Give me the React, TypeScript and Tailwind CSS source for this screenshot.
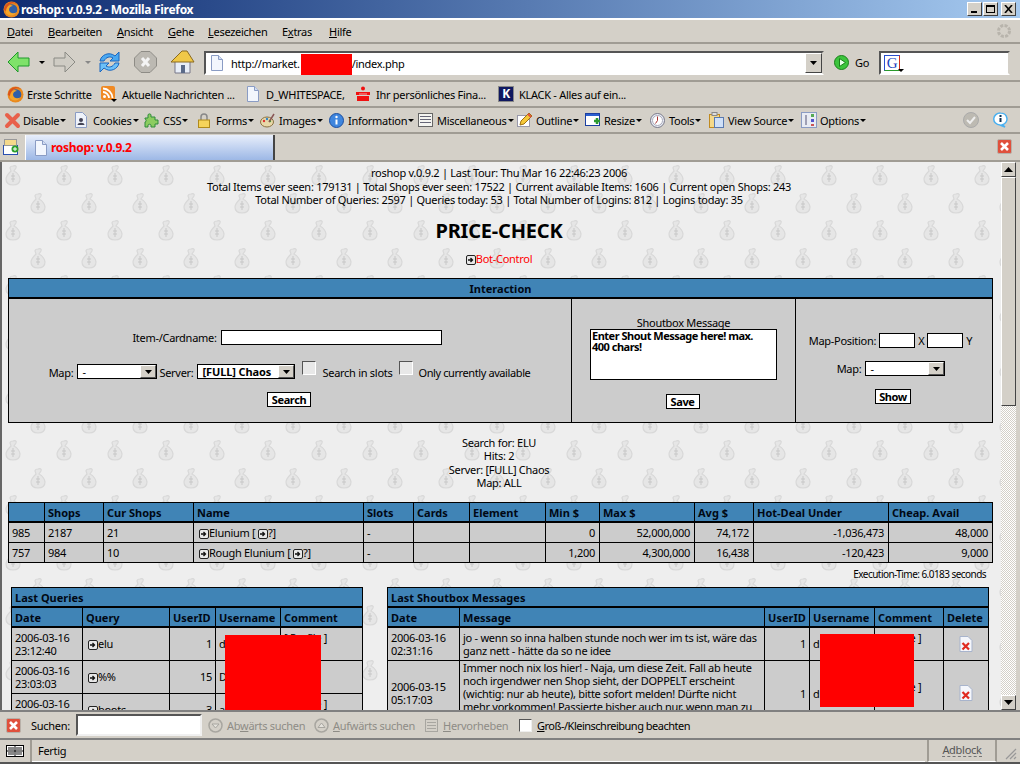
import React from "react";

const Page = ({ c = "" }: { c?: string }) => (
  <svg className={c} width="14" height="16" viewBox="0 0 14 16">
    <path d="M1.5.5h7l4 4v11h-11z" fill="#f2f6fd" stroke="#8a9cc4" />
    <path d="M8.5.5v4h4" fill="#d4def2" stroke="#8a9cc4" />
  </svg>
);
const Plus = () => (
  <svg className="inline-block align-[-2px]" width="10" height="10" viewBox="0 0 10 10">
    <rect x=".5" y=".5" width="9" height="9" rx="1.5" fill="#e8e8e8" stroke="#222" />
    <path d="M2 5h4M4.5 3l2 2-2 2" fill="none" stroke="#111" strokeWidth="1.3" />
  </svg>
);
const Fox = () => (
  <svg width="17" height="17" viewBox="0 0 17 17">
    <circle cx="8.5" cy="8.5" r="8" fill="#e98a1f" />
    <circle cx="9" cy="8.5" r="5.3" fill="#2f5fa8" />
    <path d="M3 12C5 15 11 16 14 11 11 13 7 13 6 9 6 6 8 5 10 5 8 3 4 4 3 7Z" fill="#f4a52a" />
    <path d="M1 9c0-5 4-8 8-8 2 0 4 1 5 2-3-1-6-1-8 1C4 6 3 8 3 10Z" fill="#d9531e" />
  </svg>
);
const RedX = () => (
  <svg width="15" height="15" viewBox="0 0 15 15">
    <rect x=".5" y=".5" width="14" height="14" rx="1.5" fill="#e0503c" stroke="#b8b0a8" />
    <path d="M4 4l7 7M11 4l-7 7" stroke="#fff" strokeWidth="2.6" />
  </svg>
);
const Drop = ({ c = "#000" }: { c?: string }) => (
  <svg width="6" height="3" viewBox="0 0 6 3">
    <path d="M0 0h6L3 3z" fill={c} />
  </svg>
);
const Bevel = ({ children }: { children: React.ReactNode }) => (
  <div className="w-[15px] h-[14px] bg-[#d4d0c8] border border-t-white border-l-white border-r-[#404040] border-b-[#404040] flex items-center justify-center">
    {children}
  </div>
);
const Sel = ({ w, text, bold }: { w: string; text: string; bold?: boolean }) => (
  <div className={`${w} h-[15px] bg-white border border-black flex items-center justify-between shrink-0`}>
    <span className={bold ? "pl-[4px] font-bold tracking-[-0.1px]" : "pl-[4px]"}>{text}</span>
    <div className="w-[16px] h-[13px] bg-[#d4d0c8] border border-t-white border-l-white border-r-[#555] border-b-[#555] flex items-center justify-center">
      <svg width="7" height="4" viewBox="0 0 7 4"><path d="M0 0h7L3.500 4z" fill="#000" /></svg>
    </div>
  </div>
);
const Btn = ({ children, w }: { children: React.ReactNode; w: string }) => (
  <button className={`${w} h-[15px] bg-white border border-black font-bold text-[11px] leading-[12px] tracking-[-0.4px] p-0`}>{children}</button>
);
const Check = () => <div className="w-[14px] h-[14px] bg-[#e8e8e8] border border-t-[#555] border-l-[#555] border-r-white border-b-white shrink-0" />;

const B = ({ w, icon, text, gap = "gap-[4px]" }: { w: string; icon: React.ReactNode; text: string; gap?: string }) => (
  <div className={`${w} shrink-0 flex items-center ${gap} whitespace-nowrap`}>
    {icon}
    <span>{text}</span>
  </div>
);
const T = ({ w, icon, text }: { w: string; icon: React.ReactNode; text: string }) => (
  <div className={`${w} shrink-0 flex items-center whitespace-nowrap`}>
    <div className="w-[19px] shrink-0 flex justify-start">{icon}</div>
    <span>{text}</span>
    <span className="ml-[1px] mt-[1px]"><Drop /></span>
  </div>
);

const tools = [
  { w: "w-[70px]", text: "Disable", icon: <svg width="17" height="17" viewBox="0 0 17 17"><path d="M3 3l11 11M14 3L3 14" stroke="#e8604a" strokeWidth="4" strokeLinecap="round" /></svg> },
  { w: "w-[70px]", text: "Cookies", icon: <svg width="14" height="16" viewBox="0 0 14 16"><path d="M1.500.5h7l4 4v11h-11z" fill="#eef2fa" stroke="#8a9cc4" /><circle cx="7" cy="8" r="2" fill="#445" /><path d="M3.500 13c0-3 7-3 7 0z" fill="#445" /></svg> },
  { w: "w-[53px]", text: "CSS", icon: <svg width="15" height="15" viewBox="0 0 15 15"><path d="M1 5h3V2c0-1.500 3-1.500 3 0v2h4v3h3v4h-3v3H7v-2c0-1-3-1-3 0v2H1V9c1.500 0 1.500-3 0-3z" fill="#8ccc60" stroke="#2e8b3a" /></svg> },
  { w: "w-[63px]", text: "Forms", icon: <svg width="14" height="15" viewBox="0 0 14 15"><path d="M4 7V4c0-4 6-4 6 0v3" fill="none" stroke="#888" strokeWidth="1.500" /><rect x="1.500" y="7" width="11" height="7.500" fill="#f5d35a" stroke="#b08a1a" /></svg> },
  { w: "w-[69px]", text: "Images", icon: <svg width="15" height="15" viewBox="0 0 15 15"><ellipse cx="7" cy="9" rx="6.500" ry="5" fill="#e8d8a8" stroke="#8a7040" /><circle cx="4" cy="8" r="1.200" fill="#d33" /><circle cx="7" cy="6" r="1.200" fill="#38c" /><circle cx="10" cy="8" r="1.200" fill="#3a3" /><path d="M9 9l5-8" stroke="#855" strokeWidth="1.500" /></svg> },
  { w: "w-[89px]", text: "Information", icon: <svg width="15" height="15" viewBox="0 0 15 15"><circle cx="7.500" cy="7.500" r="7" fill="#3f86de" stroke="#1c4fa0" /><circle cx="7.500" cy="4" r="1.200" fill="#fff" /><path d="M7.500 6.500v5" stroke="#fff" strokeWidth="2" /></svg> },
  { w: "w-[99px]", text: "Miscellaneous", icon: <svg width="15" height="14" viewBox="0 0 15 14"><rect x=".5" y=".5" width="14" height="13" fill="#f4f4f0" stroke="#666" /><path d="M2 3.500h11M2 6.500h11M2 9.500h11" stroke="#667" /></svg> },
  { w: "w-[68px]", text: "Outline", icon: <svg width="16" height="16" viewBox="0 0 16 16"><rect x=".5" y="3.500" width="12" height="11" fill="#fff" stroke="#99a" /><path d="M3 13l1-4 8-8 3 3-8 8z" fill="#f5c93a" stroke="#a07010" /><path d="M11 2l3 3" stroke="#e05040" strokeWidth="2" /></svg> },
  { w: "w-[65px]", text: "Resize", icon: <svg width="16" height="14" viewBox="0 0 16 14"><rect x=".5" y=".5" width="14" height="12" fill="#fff" stroke="#1c3fa0" /><rect x="1" y="1" width="13" height="2" fill="#2a5fd0" /><path d="M9 8h6M12 5v6" stroke="#2c9a30" strokeWidth="2.500" /></svg> },
  { w: "w-[59px]", text: "Tools", icon: <svg width="15" height="15" viewBox="0 0 15 15"><circle cx="7.500" cy="7.500" r="7" fill="#e8ecf4" stroke="#778" /><circle cx="7.500" cy="7.500" r="5" fill="#fff" stroke="#aab" /><path d="M7.500 3.500v4l-2 3" fill="none" stroke="#a33" /></svg> },
  { w: "w-[92px]", text: "View Source", icon: <svg width="15" height="16" viewBox="0 0 15 16"><rect x=".5" y="2.500" width="10" height="13" fill="#f5d98a" stroke="#c08a20" /><rect x="3" y="0.500" width="5" height="3" fill="#ddd" stroke="#888" /><rect x="5.500" y="5.500" width="9" height="10" fill="#cfe0f8" stroke="#5a7ab0" /></svg> },
  { w: "w-[80px]", text: "Options", icon: <svg width="16" height="16" viewBox="0 0 16 16"><rect x=".5" y=".5" width="15" height="15" fill="#e8ecf4" stroke="#8a9cc4" /><path d="M5 3v10" stroke="#557" /><rect x="10" y="2" width="3" height="3" fill="#5a5" /><rect x="10" y="7" width="3" height="3" fill="#55c" /><rect x="10" y="12" width="3" height="2" fill="#c55" /></svg> },
];

const mainHead = ["", "Shops", "Cur Shops", "Name", "Slots", "Cards", "Element", "Min $", "Max $", "Avg $", "Hot-Deal Under", "Cheap. Avail"];
const mainRows = [
  ["985", "2187", "21", "Elunium", "-", "", "", "0", "52,000,000", "74,172", "-1,036,473", "48,000"],
  ["757", "984", "10", "Rough Elunium", "-", "", "", "1,200", "4,300,000", "16,438", "-120,423", "9,000"],
];
const thBase = "border border-black border-b-2 bg-[#4084b6] font-bold px-[3px] pb-0 text-[#000814] tracking-normal";
const th = `${thBase} pt-[1px] text-left`;
const thLow = `${thBase} pt-0 text-left`;
const td = "border border-black bg-[#cccccc] px-[3px] py-0 font-normal";
const Del = () => (
  <svg className="mx-auto" width="14" height="16" viewBox="0 0 14 16">
    <path d="M1 .5h8l4 4v11H1z" fill="#f4f6fb" stroke="#a8b4cc" />
    <path d="M3.500 7l6.500 6.500M10 7l-6.500 6.500" stroke="#e02a20" strokeWidth="2.200" />
  </svg>
);

export default function App() {
  return (
    <div className="w-[1020px] h-[764px] overflow-hidden flex flex-col bg-[#d4d0c8] text-[11px] leading-[13px] tracking-[-0.28px] text-black font-['Noto_Sans',sans-serif]">
      {/* title bar */}
      <div className="h-[18px] shrink-0 flex items-center pl-[3px] pr-[4px] bg-gradient-to-r from-[#0f2a70] to-[#a6caf0]">
        <Fox />
        <span className="ml-[1px] text-white font-bold text-[12px] tracking-[-0.3px] whitespace-nowrap">roshop: v.0.9.2 - Mozilla Firefox</span>
        <div className="ml-auto flex gap-[1px]">
          <Bevel><div className="w-[6px] h-[2px] bg-black mt-[6px] mr-[2px]" /></Bevel>
          <Bevel><div className="w-[9px] h-[8px] border border-black border-t-2" /></Bevel>
          <div className="ml-[2px]"><Bevel><svg width="9" height="8" viewBox="0 0 9 8"><path d="M1 0l7 8M8 0L1 8" stroke="#000" strokeWidth="1.600" /></svg></Bevel></div>
        </div>
      </div>
      <div className="h-[2px] shrink-0 bg-white" />
      {/* menu */}
      <div className="h-[24px] shrink-0 flex items-center pl-[7px] border-b-2 border-b-[#a09c94]">
        <span className="w-[41px]"><u>D</u>atei</span>
        <span className="w-[69px]"><u>B</u>earbeiten</span>
        <span className="w-[51px]"><u>A</u>nsicht</span>
        <span className="w-[40px]"><u>G</u>ehe</span>
        <span className="w-[74px]"><u>L</u>esezeichen</span>
        <span className="w-[47px]">E<u>x</u>tras</span>
        <span><u>H</u>ilfe</span>
        <svg className="ml-auto mr-[8px]" width="16" height="16" viewBox="0 0 16 16"><circle cx="8" cy="8" r="5.500" fill="none" stroke="#b8b4ac" strokeWidth="3" strokeDasharray="3 1.300" /></svg>
      </div>
      {/* nav */}
      <div className="h-[38px] shrink-0 flex items-center border-b-2 border-[#a09c94] pl-[7px]">
        <svg width="23" height="22" viewBox="0 0 23 22"><path d="M11 1L1 11l10 10v-6h11V7H11z" fill="#7fe26a" stroke="#1f9a2a" /></svg>
        <span className="ml-[9px]"><Drop /></span>
        <svg className="ml-[8px]" width="23" height="22" viewBox="0 0 23 22"><path d="M12 1l10 10-10 10v-6H1V7h11z" fill="#cfccc4" stroke="#8a8a84" /></svg>
        <span className="ml-[9px]"><Drop c="#888" /></span>
        <svg className="ml-[7px]" width="23" height="22" viewBox="0 0 23 22"><path d="M2 10C3 4 11 0 17 5l4-4v9h-9l3-3C12 5 8 6 6 10Z" fill="#4aa8f0" stroke="#1a66c0" /><path d="M21 12c-1 6-9 10-15 5l-4 4v-9h9l-3 3c3 2 7 1 9-3Z" fill="#6cc0f8" stroke="#1a66c0" /></svg>
        <svg className="ml-[13px]" width="23" height="22" viewBox="0 0 23 22"><path d="M7 .5h9L22.500 7v8L16 21.500H7L.5 15V7z" fill="#bcb9b2" stroke="#8e8c86" /><path d="M8 7l7 8M15 7l-7 8" stroke="#f4f4f4" strokeWidth="3" /></svg>
        <svg className="ml-[13px]" width="25" height="24" viewBox="0 0 25 24"><path d="M5 11v12h15V11z" fill="#e8eef8" stroke="#778" /><path d="M1 12L12 1h5l7 11z" fill="#f0c848" stroke="#8a6a20" /><rect x="11" y="15" width="4" height="8" fill="#5a6a88" /></svg>
        <div className="ml-[9px] mt-[2px] w-[620px] h-[24px] shrink-0 bg-white border-2 border-t-[#555] border-l-[#555] border-r-[#d4d0c8] border-b-white flex items-center pl-[4px] relative">
          <Page />
          <span className="ml-[7px] whitespace-nowrap">http://market.</span>
          <span className="ml-[52px] whitespace-nowrap">/index.php</span>
          <div className="absolute left-[95px] top-[1px] w-[51px] h-[21px] bg-[#ff0000]" />
          <div className="ml-auto w-[17px] h-[20px] bg-[#d4d0c8] border border-t-white border-l-white border-r-[#444] border-b-[#444] flex items-center justify-center">
            <svg width="7" height="4" viewBox="0 0 7 4"><path d="M0 0h7L3.500 4z" /></svg>
          </div>
        </div>
        <svg className="ml-[10px]" width="15" height="15" viewBox="0 0 15 15"><circle cx="7.500" cy="7.500" r="7" fill="#3cc43c" stroke="#1a801a" /><path d="M5.500 3.500l6 4-6 4z" fill="#e8ffe8" stroke="#1a801a" /></svg>
        <span className="ml-[6px] w-[15px]">Go</span>
        <div className="ml-[9px] mt-[2px] w-[131px] h-[24px] shrink-0 bg-white border-2 border-t-[#555] border-l-[#555] border-r-[#d4d0c8] border-b-white flex items-center pl-[3px]">
          <div className="relative w-[16px] h-[16px] border border-t-[#2a4fd0] border-l-[#2a4fd0] border-b-[#2a9a2a] border-r-[#d03020] text-[#1a3fc0] text-[15px] leading-[14px] font-['Liberation_Serif',serif] text-center">
            G
            <span className="absolute -right-[5px] bottom-[-2px] leading-[0]"><Drop /></span>
          </div>
        </div>
      </div>
      {/* bookmarks */}
      <div className="h-[26px] shrink-0 flex items-center border-b-2 border-[#a09c94] pl-[7px]">
        <B w="w-[94px]" gap="gap-[3px]" icon={<Fox />} text="Erste Schritte" />
        <B w="w-[145px]" gap="gap-[5px]" icon={<svg width="16" height="16" viewBox="0 0 16 16"><rect width="14" height="14" rx="2" fill="#f08a24" /><circle cx="3.500" cy="10.500" r="1.500" fill="#fff" /><path d="M2 6c3 0 6 3 6 6M2 2.500c5 0 9.500 4.500 9.500 9.500" fill="none" stroke="#fff" strokeWidth="1.800" /><path d="M10 13h6l-3 3z" /></svg>} text="Aktuelle Nachrichten ..." />
        <B w="w-[110px]" gap="gap-[6px]" icon={<Page />} text="D_WHITESPACE," />
        <B w="w-[142px]" gap="gap-[6px]" icon={<svg width="14" height="16" viewBox="0 0 14 16"><circle cx="7" cy="2.500" r="2" fill="#f01010" /><rect y="6" width="14" height="3" fill="#f01010" /><path d="M1 10h12v5H1zM2 11" fill="#f01010" /><path d="M3 8h8" stroke="#fff" strokeWidth=".6" /></svg>} text="Ihr persönliches Fina..." />
        <B w="w-[140px]" gap="gap-[5px]" icon={<div className="w-[16px] h-[16px] bg-[#101860] border border-[#888] text-white font-bold text-[12px] leading-[14px] text-center">K</div>} text="KLACK - Alles auf ein..." />
      </div>
      {/* web developer */}
      <div className="h-[26px] shrink-0 flex items-center border-b-2 border-[#a09c94] pl-[4px]">
        {tools.map((t) => <T key={t.text} w={t.w} icon={t.icon} text={t.text} />)}
        <svg className="ml-auto" width="16" height="16" viewBox="0 0 16 16"><circle cx="8" cy="8" r="7.500" fill="#bdbab2" stroke="#aaa" /><path d="M4 8l3 3 5-6" fill="none" stroke="#eee" strokeWidth="2" /></svg>
        <svg className="ml-[14px] mr-[12px]" width="15" height="16" viewBox="0 0 15 16"><path d="M7.500 1a6.500 6 0 0 1 2 11.700L12 15l-5-2a6.500 6 0 0 1 .5-12z" fill="#fff" stroke="#4ab0f0" strokeWidth="1.500" /><rect x="6.500" y="3" width="2" height="2" fill="#135" /><rect x="6.500" y="6" width="2" height="4" fill="#135" /></svg>
      </div>
      {/* tabs */}
      <div className="h-[26px] shrink-0 flex items-start pt-[1px] pl-[3px]">
        <svg className="mt-[4px]" width="16" height="16" viewBox="0 0 16 16"><rect x=".5" y="6.500" width="14" height="9" fill="#fff" stroke="#2a4fb0" /><rect x="1.500" y=".5" width="12" height="6" fill="#f5d98a" stroke="#999" /><circle cx="12" cy="10" r="3.500" fill="#2ca02c" /><path d="M10 10h4M12 8v4" stroke="#fff" /></svg>
        <div className="ml-[6px] w-[250px] h-[25px] bg-gradient-to-b from-[#e8eefa] to-[#9db8e6] border-r-2 border-r-[#444] border-l border-l-white flex items-center pl-[8px] gap-[3px]">
          <Page />
          <span className="text-[#ff0000] font-bold text-[12px] tracking-[-0.3px] whitespace-nowrap">roshop: v.0.9.2</span>
        </div>
        <div className="ml-auto mr-[8px] mt-[4px]"><RedX /></div>
      </div>
      {/* content row */}
      <div className="h-[2px] shrink-0 bg-[#a09c94]" />
      <div className="flex-1 min-h-0 flex">
        <div className="w-[2px] bg-[#666] shrink-0" />
        <div className="relative w-[999px] shrink-0 overflow-hidden bg-[#eeeeee]">
          <svg className="absolute inset-0" width="1000" height="560">
            <defs>
              <g id="bag">
                <path d="M8 1c2-1 4 0 3 2L9 6c4 2 6 6 6 8 0 4-3 6-7 6s-7-2-7-6c0-3 3-6 5-8L5 3c0-1 1-2 3-2z" fill="#e6e6e6" stroke="#d8d8d8" strokeWidth="1.200" />
                <path d="M8 8v9M6 11h4M6 14h4" stroke="#c8c8c8" fill="none" />
              </g>
              <pattern id="bags" width="51" height="55" patternUnits="userSpaceOnUse">
                <use href="#bag" x="3" y="3" />
                <use href="#bag" x="28" y="31" />
              </pattern>
            </defs>
            <rect width="1000" height="560" fill="url(#bags)" />
          </svg>
          <div className="relative">
            <div className="pt-[4px] pr-[5px] text-center leading-[13.500px] whitespace-nowrap">
              <div>roshop v.0.9.2 | Last Tour: Thu Mar 16 22:46:23 2006</div>
              <div>Total Items ever seen: 179131 | Total Shops ever seen: 17522 | Current available Items: 1606 | Current open Shops: 243</div>
              <div>Total Number of Queries: 2597 | Queries today: 53 | Total Number of Logins: 812 | Logins today: 35</div>
            </div>
            <h1 className="mt-[11px] pr-[5px] h-[26px] text-center text-[20px] leading-[26px] tracking-[-0.2px] font-bold">PRICE-CHECK</h1>
            <div className="mt-[8px] pr-[5px] h-[13px] text-center text-[#ff0000]"><Plus /><span>Bot-Control</span></div>
            {/* interaction */}
            <table className="mt-[13px] ml-[6px] w-[984px] table-fixed border-collapse">
              <colgroup><col className="w-[563px]" /><col className="w-[224px]" /><col className="w-[197px]" /></colgroup>
              <tbody>
                <tr className="h-[20px]"><th colSpan={3} className={`${thBase} pt-[1px] text-center`}>Interaction</th></tr>
                <tr className="h-[124px]">
                  <td className={`${td} align-top`}>
                    <div className="flex flex-col items-center pt-[31px]">
                      <div className="flex items-center gap-[4px] h-[15px] pr-[6px]">
                        <span>Item-/Cardname:</span>
                        <input readOnly className="w-[221px] h-[15px] bg-white border border-black" />
                      </div>
                      <div className="mt-[16px] h-[18px] flex items-end gap-[4px] whitespace-nowrap pr-[1px]">
                        <span>Map:</span><Sel w="w-[80px]" text="-" />
                        <span className="-ml-[2px]">Server:</span><Sel w="w-[98px]" text="[FULL] Chaos" bold />
                        <div className="ml-[3px] self-start"><Check /></div><span className="ml-[2px]">Search in slots</span>
                        <div className="ml-[3px] self-start"><Check /></div><span className="ml-[1px] tracking-[-0.4px]">Only currently available</span>
                      </div>
                      <div className="mt-[13px] pr-[2px]"><Btn w="w-[44px]">Search</Btn></div>
                    </div>
                  </td>
                  <td className={`${td} align-top`}>
                    <div className="flex flex-col items-center pt-[17px]">
                      <span>Shoutbox Message</span>
                      <textarea readOnly value={"Enter Shout Message here! max.\n400 chars!"} className="w-[187px] h-[51px] bg-white border border-black font-bold text-[11px] leading-[11px] pl-[1px] resize-none tracking-[-0.5px] overflow-hidden" />
                      <div className="mt-[14px] pr-[2px]"><Btn w="w-[34px]">Save</Btn></div>
                    </div>
                  </td>
                  <td className={`${td} align-top`}>
                    <div className="flex flex-col items-center pt-[34px]">
                      <div className="flex items-center gap-[3px] h-[15px] pr-[7px]">
                        <span>Map-Position:</span>
                        <input readOnly className="w-[36px] h-[15px] bg-white border border-black" />
                        <span>X</span>
                        <input readOnly className="w-[36px] h-[15px] bg-white border border-black" />
                        <span>Y</span>
                      </div>
                      <div className="mt-[13px] flex items-center gap-[4px] h-[15px] pr-[6px]">
                        <span>Map:</span><Sel w="w-[80px]" text="-" />
                      </div>
                      <div className="mt-[13px] pr-[2px]"><Btn w="w-[36px]">Show</Btn></div>
                    </div>
                  </td>
                </tr>
              </tbody>
            </table>
            <div className="mt-[13px] pr-[5px] text-center leading-[13.500px]">
              <div>Search for: ELU</div>
              <div>Hits: 2</div>
              <div>Server: [FULL] Chaos</div>
              <div>Map: ALL</div>
            </div>
            {/* results */}
            <table className="mt-[12px] ml-[6px] w-[984px] table-fixed border-collapse">
              <colgroup>
                <col className="w-[36px]" /><col className="w-[59px]" /><col className="w-[90px]" /><col className="w-[170px]" /><col className="w-[50px]" /><col className="w-[56px]" /><col className="w-[76px]" /><col className="w-[54px]" /><col className="w-[95px]" /><col className="w-[59px]" /><col className="w-[135px]" /><col className="w-[104px]" />
              </colgroup>
              <thead>
                <tr className="h-[20px]">{mainHead.map((h, i) => <th key={i} className={th}>{h}</th>)}</tr>
              </thead>
              <tbody>
                {mainRows.map((r) => (
                  <tr key={r[0]} className="h-[20px]">
                    {r.map((c, i) => (
                      <td key={i} className={`${td} ${i >= 7 ? "text-right pr-[4px]" : ""} ${i === 3 ? "pl-[5px]" : ""} whitespace-nowrap`}>
                        {i === 3 ? <><Plus />{c} [ <Plus />?]</> : c}
                      </td>
                    ))}
                  </tr>
                ))}
              </tbody>
            </table>
            <div className="mt-[5px] h-[13px] pr-[15px] text-right text-[10px] tracking-[-0.55px]">Execution-Time: 6.0183 seconds</div>
            {/* lower tables */}
            <div className="mt-[6px] ml-[9px] flex items-start gap-[24px]">
              <table className="w-[351px] table-fixed border-collapse shrink-0">
                <colgroup><col className="w-[71px]" /><col className="w-[87px]" /><col className="w-[46px]" /><col className="w-[65px]" /><col className="w-[82px]" /></colgroup>
                <tbody>
                  <tr className="h-[20px]"><th colSpan={5} className={th}>Last Queries</th></tr>
                  <tr className="h-[20px]">{["Date", "Query", "UserID", "Username", "Comment"].map((h) => <th key={h} className={thLow}>{h}</th>)}</tr>
                  {[
                    ["2006-03-16", "23:12:40", "elu", "1", "d", "[ Profile ]"],
                    ["2006-03-16", "23:03:03", "%%", "15", "D", ""],
                    ["2006-03-16", "22:58:11", "boots", "3", "a", "[ Profile ]"],
                  ].map((r) => (
                    <tr key={r[1]} className="h-[33px]">
                      <td className={td}>{r[0]}<br />{r[1]}</td>
                      <td className={`${td} pl-[5px]`}><Plus />{r[2]}</td>
                      <td className={`${td} text-right`}>{r[3]}</td>
                      <td className={td}>{r[4]}</td>
                      <td className={td}>{r[5]}<br />&nbsp;</td>
                    </tr>
                  ))}
                </tbody>
              </table>
              <table className="w-[601px] table-fixed border-collapse shrink-0">
                <colgroup><col className="w-[72px]" /><col className="w-[305px]" /><col className="w-[45px]" /><col className="w-[65px]" /><col className="w-[69px]" /><col className="w-[45px]" /></colgroup>
                <tbody>
                  <tr className="h-[20px]"><th colSpan={6} className={th}>Last Shoutbox Messages</th></tr>
                  <tr className="h-[20px]">{["Date", "Message", "UserID", "Username", "Comment", "Delete"].map((h) => <th key={h} className={thLow}>{h}</th>)}</tr>
                  <tr className="h-[33px]">
                    <td className={td}>2006-03-16<br />02:31:16</td>
                    <td className={td}>jo - wenn so inna halben stunde noch wer im ts ist, wäre das ganz nett - hätte da so ne idee</td>
                    <td className={`${td} text-right`}>1</td>
                    <td className={td}>d</td>
                    <td className={td}>[ Profile ]<br />&nbsp;</td>
                    <td className={td}><Del /></td>
                  </tr>
                  <tr>
                    <td className={td}>2006-03-15<br />05:17:03</td>
                    <td className={td}>Immer noch nix los hier! - Naja, um diese Zeit. Fall ab heute noch irgendwer nen Shop sieht, der DOPPELT erscheint (wichtig: nur ab heute), bitte sofort melden! Dürfte nicht mehr vorkommen! Passierte bisher auch nur, wenn man zu lange wartet</td>
                    <td className={`${td} text-right`}>1</td>
                    <td className={td}>d</td>
                    <td className={td}>[ Profile ]<br />&nbsp;</td>
                    <td className={td}><Del /></td>
                  </tr>
                </tbody>
              </table>
            </div>
          </div>
          <div className="absolute left-[223px] top-[473px] w-[96px] h-[77px] bg-[#ff0000]" />
          <div className="absolute left-[818px] top-[472px] w-[94px] h-[73px] bg-[#ff0000]" />
        </div>
        {/* scrollbar */}
        <div className="w-[15px] shrink-0 flex flex-col bg-[repeating-conic-gradient(#d4d0c8_0_25%,#ffffff_0_50%)] bg-[length:2px_2px]">
          <div className="h-[15px] shrink-0 bg-[#d4d0c8] border border-t-white border-l-white border-r-[#444] border-b-[#444] flex items-center justify-center">
            <svg width="9" height="5" viewBox="0 0 9 5"><path d="M4.500 0L9 5H0z" /></svg>
          </div>
          <div className="h-[229px] shrink-0 bg-[#d4d0c8] border border-t-white border-l-white border-r-[#444] border-b-[#444]" />
          <div className="mt-auto h-[15px] shrink-0 bg-[#d4d0c8] border border-t-white border-l-white border-r-[#444] border-b-[#444] flex items-center justify-center">
            <svg width="9" height="5" viewBox="0 0 9 5"><path d="M0 0h9L4.500 5z" /></svg>
          </div>
        </div>
        <div className="w-[4px] shrink-0" />
      </div>
      {/* find bar */}
      <div className="h-[28px] shrink-0 border-t-2 border-[#808080] flex items-center pl-[6px] text-[#8e8c86]">
        <RedX />
        <span className="ml-[10px] w-[39px] text-black">Suchen:</span>
        <input readOnly className="ml-[6px] w-[126px] h-[22px] bg-white border-2 border-t-[#555] border-l-[#555] border-r-[#f0f0f0] border-b-[#f0f0f0]" />
        <svg className="ml-[6px]" width="15" height="15" viewBox="0 0 15 15"><circle cx="7.500" cy="7.500" r="6.500" fill="none" stroke="#a8a6a0" strokeWidth="1.500" /><path d="M4 6h7l-3.500 4z" fill="#e4e2dc" stroke="#a8a6a0" /></svg>
        <span className="ml-[4px] w-[87px] whitespace-nowrap">Ab<u>w</u>ärts suchen</span>
        <svg width="15" height="15" viewBox="0 0 15 15"><circle cx="7.500" cy="7.500" r="6.500" fill="none" stroke="#a8a6a0" strokeWidth="1.500" /><path d="M4 9.500h7L7.500 5z" fill="#e4e2dc" stroke="#a8a6a0" /></svg>
        <span className="ml-[4px] w-[91px] whitespace-nowrap"><u>A</u>ufwärts suchen</span>
        <svg width="15" height="15" viewBox="0 0 15 15"><rect x="1.500" y="1.500" width="12" height="12" fill="none" stroke="#a8a6a0" /><path d="M3 4.500h9M3 7.500h9M3 10.500h9" stroke="#a8a6a0" /></svg>
        <span className="ml-[4px] w-[76px] whitespace-nowrap"><u>H</u>ervorheben</span>
        <div className="w-[13px] h-[13px] bg-white border border-t-[#555] border-l-[#555] border-r-[#eee] border-b-[#eee]" />
        <span className="ml-[5px] text-black whitespace-nowrap tracking-[-0.5px]"><u>G</u>roß-/Kleinschreibung beachten</span>
      </div>
      {/* status */}
      <div className="h-[24px] shrink-0 border-t-2 border-[#808080] flex items-stretch">
        <div className="w-[32px] flex items-center pl-[6px] border-r-2 border-[#a09c94]">
          <svg width="18" height="12" viewBox="0 0 18 12"><rect x=".5" y=".5" width="17" height="11" fill="#fff" stroke="#000" /><path d="M9 1v10M1 6h16" stroke="#000" /><path d="M2 2h6v3H2zM10 2h6v3h-6zM2 7h6v3H2zM10 7h6v3h-6z" fill="#888" /></svg>
        </div>
        <div className="w-[893px] flex items-center pl-[6px] border-b border-white">Fertig</div>
        <div className="w-[70px] ml-[2px] flex items-center justify-center border-l-2 border-r-2 border-[#a09c94] border-b border-b-white text-[#555]">
          <span className="border-b border-dashed border-[#777] leading-[12px]">Adblock</span>
        </div>
        <svg className="ml-auto mr-[3px] self-end mb-[2px]" width="13" height="13" viewBox="0 0 13 13"><path d="M2 12L12 2M6 12l6-6M10 12l2-2" stroke="#999" strokeWidth="1.200" /></svg>
      </div>
      <div className="h-[2px] shrink-0 bg-[#555]" />
    </div>
  );
}
